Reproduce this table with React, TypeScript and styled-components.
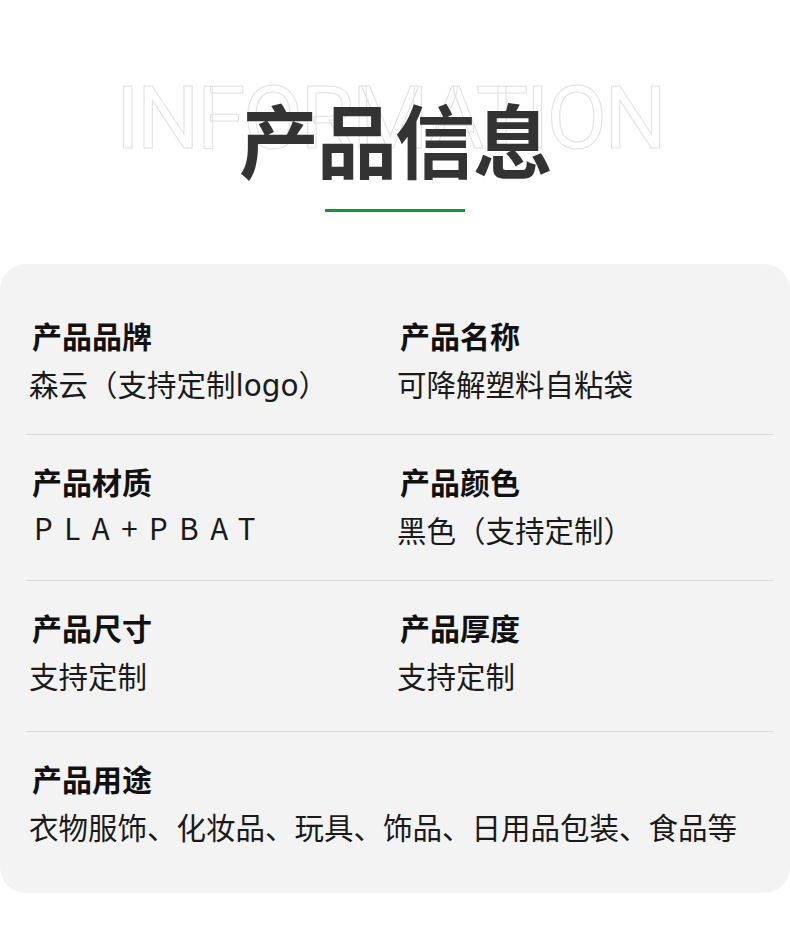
import React from "react";
import styled, { createGlobalStyle } from "styled-components";

const GlobalStyle = createGlobalStyle`
  html, body {
    margin: 0;
    padding: 0;
    background: #ffffff;
  }
  body {
    font-family: "Noto Sans CJK SC", "Noto Sans", sans-serif;
  }
`;

const Page = styled.div`
  width: 790px;
  height: 938px;
  display: flex;
  flex-direction: column;
  background: #ffffff;
  overflow: hidden;
`;

const Header = styled.header`
  height: 264px;
  display: grid;
  justify-items: center;
  align-content: start;
`;

const Ghost = styled.div`
  grid-area: 1 / 1;
  margin: 74px 10px 0 0;
  font-family: Roboto, "Liberation Sans", sans-serif;
  font-weight: 400;
  font-size: 88px;
  line-height: 1;
  letter-spacing: -2.8px;
  color: transparent;
  -webkit-text-stroke: 1px #e0e0e0;
`;

const Title = styled.h1`
  grid-area: 1 / 1;
  margin: 97px 0 0;
  font-family: "Noto Sans CJK SC", sans-serif;
  font-weight: 700;
  font-size: 80px;
  line-height: 1;
  color: #333333;
  letter-spacing: -2px;
`;

const Rule = styled.div`
  grid-area: 2 / 1;
  width: 140px;
  height: 3px;
  margin-top: 32px;
  background: #139540;
`;

const Panel = styled.section`
  flex: none;
  height: 629px;
  background: #f3f3f3;
  border-radius: 26px;
  padding: 25px 17px 0 26px;
  box-sizing: border-box;
  display: flex;
  flex-direction: column;
`;

const Row = styled.div<{ $last?: boolean; $pb: number }>`
  display: grid;
  grid-template-columns: 368px 1fr;
  padding: 31px 0 ${(p) => p.$pb}px;
  border-bottom: ${(p) => (p.$last ? "none" : "1px solid #d8d8d8")};
`;

const Item = styled.div`
  display: flex;
  flex-direction: column;
  gap: 21px;
`;

const Label = styled.div`
  padding-left: 6px;
  font-weight: 700;
  font-size: 30px;
  line-height: 30px;
  color: #111111;
`;

const Value = styled.div<{ $spaced?: boolean }>`
  padding-left: ${(p) => (p.$spaced ? 8 : 3)}px;
  margin-top: ${(p) => (p.$spaced ? -5 : 0)}px;
  font-family: ${(p) =>
    p.$spaced
      ? `"Noto Sans CJK SC", sans-serif`
      : `"DejaVu Sans", "Noto Sans CJK SC", sans-serif`};
  font-weight: 400;
  font-size: 29.5px;
  line-height: 30px;
  color: #1a1a1a;
  white-space: nowrap;
  letter-spacing: ${(p) => (p.$spaced ? "11.5px" : "0")};
`;

type Spec = { label: string; value: string; spaced?: boolean };

const rows: { pb: number; items: Spec[] }[] = [
  {
    pb: 33,
    items: [
      { label: "产品品牌", value: "森云（支持定制logo）" },
      { label: "产品名称", value: "可降解塑料自粘袋" },
    ],
  },
  {
    pb: 33,
    items: [
      { label: "产品材质", value: "PLA+PBAT", spaced: true },
      { label: "产品颜色", value: "黑色（支持定制）" },
    ],
  },
  {
    pb: 38,
    items: [
      { label: "产品尺寸", value: "支持定制" },
      { label: "产品厚度", value: "支持定制" },
    ],
  },
  {
    pb: 0,
    items: [
      {
        label: "产品用途",
        value: "衣物服饰、化妆品、玩具、饰品、日用品包装、食品等",
      },
    ],
  },
];

const App: React.FC = () => (
  <Page>
    <GlobalStyle />
    <Header>
      <Ghost>INFORMATION</Ghost>
      <Title>产品信息</Title>
      <Rule />
    </Header>
    <Panel>
      {rows.map((row, i) => (
        <Row key={i} $pb={row.pb} $last={i === rows.length - 1}>
          {row.items.map((it) => (
            <Item key={it.label}>
              <Label>{it.label}</Label>
              <Value $spaced={it.spaced}>{it.value}</Value>
            </Item>
          ))}
        </Row>
      ))}
    </Panel>
  </Page>
);

export default App;
